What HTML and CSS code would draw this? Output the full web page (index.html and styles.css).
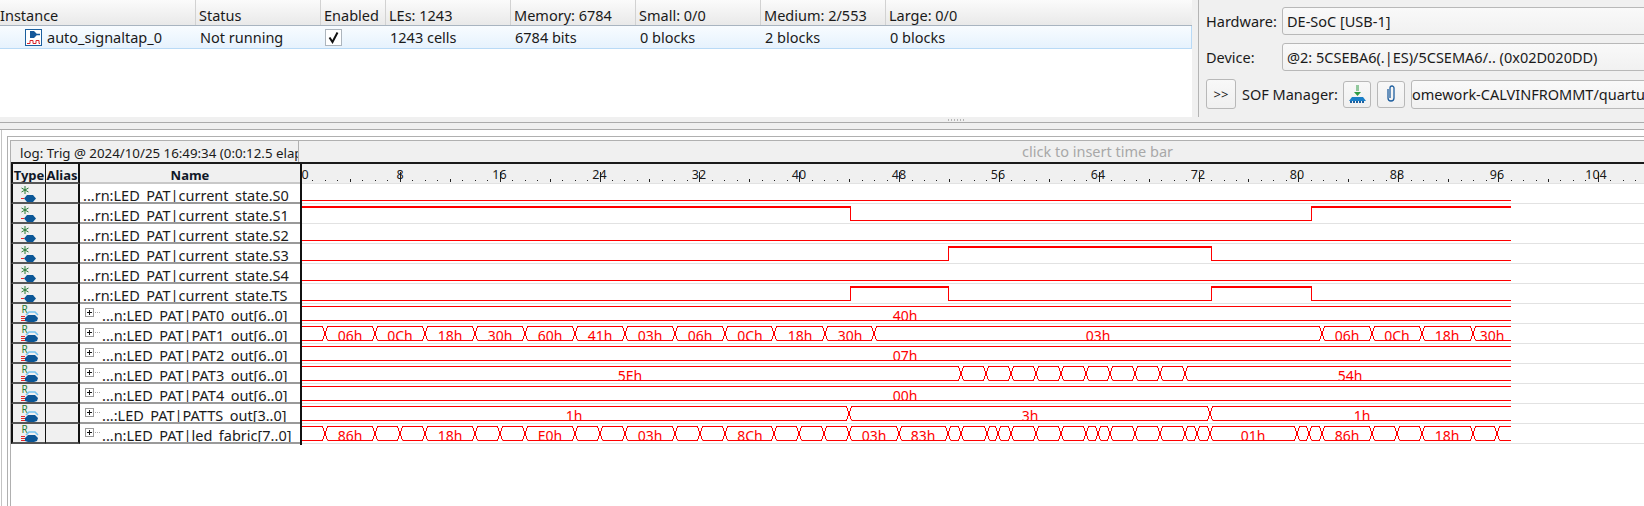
FILE: index.html
```html
<!DOCTYPE html>
<html lang="en">
<head>
<meta charset="utf-8">
<title>Signal Tap Logic Analyzer</title>
<link rel="stylesheet" href="styles.css">
</head>
<body>
<svg class="defs" width="0" height="0" aria-hidden="true">
  <defs>
    <g id="bit">
      <path class="star" d="M13 2v8M9.5 4l7 4M16.5 4l-7 4"/>
      <path class="dash" d="M9 14.5h3"/>
      <path class="blob" d="M12 14.5l3-3.5h6l3 3.5-3 3.5h-6z"/>
    </g>
    <g id="reg">
      <text class="rtag" x="9.5" y="9">R</text>
      <path class="dash" d="M9 12.5h4M9 14.5h4M9 16.5h4"/>
      <path class="blob" d="M13 14l3-3h7l3 3-1 3-3 1h-6l-3-1z"/>
      <path class="band" d="M14 11l3-3h6l3 3"/>
    </g>
    <g id="plus">
      <rect class="plusbox" x="0.5" y="3.5" width="8" height="8"/>
      <path class="plusmark" d="M2 7.5h5M4.5 5v5"/>
      <path class="plusdots" d="M10 7.5h6"/>
    </g>
    <g id="x">
      <rect x="-2" y="2" width="4.5" height="17" fill="#fff"/>
      <path class="bus" d="M-2.5 3.5L2.5 17.5M-2.5 17.5L2.5 3.5"/>
    </g>
  </defs>
</svg>

<section class="top">
  <div class="instances">
    <div class="ihead">
      <div class="ih c1">Instance</div>
      <div class="ih c2">Status</div>
      <div class="ih c3">Enabled</div>
      <div class="ih c4">LEs: 1243</div>
      <div class="ih c5">Memory: 6784</div>
      <div class="ih c5">Small: 0/0</div>
      <div class="ih c5">Medium: 2/553</div>
      <div class="ih c6">Large: 0/0</div>
    </div>
    <div class="irow">
      <div class="id c1 inst">
        <svg class="insticon" width="17" height="17" viewBox="0 0 17 17">
          <rect x="0.5" y="0.5" width="16" height="16" fill="#fff" stroke="#1b5f9e"/>
          <path d="M5 2h4l3 3v1l-3 3H5z" fill="#14589a"/>
          <path d="M12 5.5h3" stroke="#14589a" stroke-width="1.5"/>
          <path d="M2 14.5h3v-3h3v3h3v-3h3v3h1" fill="none" stroke="#d8232a"/>
        </svg>
        <span>auto_signaltap_0</span>
      </div>
      <div class="id c2">Not running</div>
      <div class="id c3">
        <span class="check">
          <svg width="15" height="15" viewBox="0 0 15 15"><path d="M3.5 7.5l3 4.5 5-9.5" fill="none" stroke="#111" stroke-width="2"/></svg>
        </span>
      </div>
      <div class="id c4">1243 cells</div>
      <div class="id c5">6784 bits</div>
      <div class="id c5">0 blocks</div>
      <div class="id c5">2 blocks</div>
      <div class="id c6">0 blocks</div>
    </div>
  </div>
  <div class="grip"></div>
  <div class="hardware">
    <div class="hwrow">
      <span class="hwlabel">Hardware:</span>
      <div class="combo">DE-SoC [USB-1]</div>
    </div>
    <div class="hwrow">
      <span class="hwlabel">Device:</span>
      <div class="combo">@2: 5CSEBA6(.|ES)/5CSEMA6/.. (0x02D020DD)</div>
    </div>
    <div class="sofrow">
      <button class="btn more" type="button">&gt;&gt;</button>
      <span class="soflabel">SOF Manager:</span>
      <button class="btn tool" type="button">
        <svg width="19" height="19" viewBox="0 0 19 19">
          <path d="M8 1h3M8 3h3M8 5h3" stroke="#2e9b45"/>
          <path d="M6 7h7l-3.5 4z" fill="#2e9b45"/>
          <path d="M1 16l3-4h11l3 4z" fill="#1a7fc8"/>
          <path d="M2 17h15" stroke="#1a5fa0" stroke-width="2" stroke-dasharray="2 1"/>
        </svg>
      </button>
      <button class="btn tool" type="button">
        <svg width="14" height="20" viewBox="0 0 14 20">
          <path d="M4 5v9a3 3 0 0 0 6 0V4a2 2 0 0 0-4 0v10" fill="none" stroke="#1f5f9f" stroke-width="1.3"/>
        </svg>
      </button>
      <div class="combo file">omework-CALVINFROMMT/quartus/output_files/soc_system.sof</div>
    </div>
  </div>
</section>

<div class="splitter"><span class="dots"></span></div>
<div class="tabband"></div>

<section class="lower">
  <div class="outer">
    <div class="inner">
      <div class="bar">
        <div class="log">log: Trig @ 2024/10/25 16:49:34 (0:0:12.5 elapsed)</div>
        <div class="insert">click to insert time bar</div>
      </div>
      <div class="table">
        <div class="signals">
          <div class="shead">
            <div class="th tcol">Type</div>
            <div class="th acol">Alias</div>
            <div class="th ncol">Name</div>
          </div>
          <div class="sig"><div class="tcol cell"><svg class="ticon" width="32" height="20"><use href="#bit"/></svg></div><div class="acol cell"></div><div class="name">...rn:LED_PAT|current_state.S0</div></div>
          <div class="sig"><div class="tcol cell"><svg class="ticon" width="32" height="20"><use href="#bit"/></svg></div><div class="acol cell"></div><div class="name">...rn:LED_PAT|current_state.S1</div></div>
          <div class="sig"><div class="tcol cell"><svg class="ticon" width="32" height="20"><use href="#bit"/></svg></div><div class="acol cell"></div><div class="name">...rn:LED_PAT|current_state.S2</div></div>
          <div class="sig"><div class="tcol cell"><svg class="ticon" width="32" height="20"><use href="#bit"/></svg></div><div class="acol cell"></div><div class="name">...rn:LED_PAT|current_state.S3</div></div>
          <div class="sig"><div class="tcol cell"><svg class="ticon" width="32" height="20"><use href="#bit"/></svg></div><div class="acol cell"></div><div class="name">...rn:LED_PAT|current_state.S4</div></div>
          <div class="sig"><div class="tcol cell"><svg class="ticon" width="32" height="20"><use href="#bit"/></svg></div><div class="acol cell"></div><div class="name">...rn:LED_PAT|current_state.TS</div></div>
          <div class="sig"><div class="tcol cell"><svg class="ticon" width="32" height="20"><use href="#reg"/></svg></div><div class="acol cell"></div><div class="name bus-name"><svg class="pluss" width="17" height="14"><use href="#plus"/></svg>...n:LED_PAT|PAT0_out[6..0]</div></div>
          <div class="sig"><div class="tcol cell"><svg class="ticon" width="32" height="20"><use href="#reg"/></svg></div><div class="acol cell"></div><div class="name bus-name"><svg class="pluss" width="17" height="14"><use href="#plus"/></svg>...n:LED_PAT|PAT1_out[6..0]</div></div>
          <div class="sig"><div class="tcol cell"><svg class="ticon" width="32" height="20"><use href="#reg"/></svg></div><div class="acol cell"></div><div class="name bus-name"><svg class="pluss" width="17" height="14"><use href="#plus"/></svg>...n:LED_PAT|PAT2_out[6..0]</div></div>
          <div class="sig"><div class="tcol cell"><svg class="ticon" width="32" height="20"><use href="#reg"/></svg></div><div class="acol cell"></div><div class="name bus-name"><svg class="pluss" width="17" height="14"><use href="#plus"/></svg>...n:LED_PAT|PAT3_out[6..0]</div></div>
          <div class="sig"><div class="tcol cell"><svg class="ticon" width="32" height="20"><use href="#reg"/></svg></div><div class="acol cell"></div><div class="name bus-name"><svg class="pluss" width="17" height="14"><use href="#plus"/></svg>...n:LED_PAT|PAT4_out[6..0]</div></div>
          <div class="sig"><div class="tcol cell"><svg class="ticon" width="32" height="20"><use href="#reg"/></svg></div><div class="acol cell"></div><div class="name bus-name"><svg class="pluss" width="17" height="14"><use href="#plus"/></svg>...:LED_PAT|PATTS_out[3..0]</div></div>
          <div class="sig"><div class="tcol cell"><svg class="ticon" width="32" height="20"><use href="#reg"/></svg></div><div class="acol cell"></div><div class="name bus-name"><svg class="pluss" width="17" height="14"><use href="#plus"/></svg>...n:LED_PAT|led_fabric[7..0]</div></div>
        </div>

        <svg class="wave" width="1342" height="281" viewBox="302 164 1342 281">
          <rect x="302" y="164" width="1342" height="19" fill="#f0f0f0"/>
          <path class="minor" d="M300 180.5H1644"/>
          <path class="minor4" d="M300 180H1644"/>
          <path class="major" d="M300 177H1644"/>
          <g class="rlabels">
            <text x="305" y="179">0</text>
            <text x="400" y="179">8</text>
            <text x="499.5" y="179">16</text>
            <text x="599.5" y="179">24</text>
            <text x="699" y="179">32</text>
            <text x="799" y="179">40</text>
            <text x="899" y="179">48</text>
            <text x="998" y="179">56</text>
            <text x="1098" y="179">64</text>
            <text x="1198" y="179">72</text>
            <text x="1297" y="179">80</text>
            <text x="1397" y="179">88</text>
            <text x="1497" y="179">96</text>
            <text x="1596" y="179">104</text>
          </g>
          <path class="rows" d="M302 183.5H1644M302 203.5H1644M302 223.5H1644M302 243.5H1644M302 263.5H1644M302 283.5H1644M302 303.5H1644M302 323.5H1644M302 343.5H1644M302 363.5H1644M302 383.5H1644M302 403.5H1644M302 423.5H1644M302 443.5H1644"/>

          <g transform="translate(0,183)"><path class="bus" d="M302 17.5H1511"/></g>
          <g transform="translate(0,203)">
            <path class="hi" d="M302 3.5H850M1311 3.5H1511"/>
            <path class="bus" d="M850.5 3V17.5H1311.5V3"/>
          </g>
          <g transform="translate(0,223)"><path class="bus" d="M302 17.5H1511"/></g>
          <g transform="translate(0,243)">
            <path class="hi" d="M948 3.5H1211"/>
            <path class="bus" d="M302 17.5H948.5V3M1211.5 3V17.5H1511"/>
          </g>
          <g transform="translate(0,263)"><path class="bus" d="M302 17.5H1511"/></g>
          <g transform="translate(0,283)">
            <path class="hi" d="M850 3.5H948M1211 3.5H1311"/>
            <path class="bus" d="M302 17.5H850.5V3M948.5 3V17.5H1211.5V3M1311.5 3V17.5H1511"/>
          </g>

          <g transform="translate(0,303)">
            <path class="bus" d="M302 3.5H1511M302 17.5H1511"/>
            <text class="val" x="905" y="18">40h</text>
          </g>
          <g transform="translate(0,323)">
            <path class="bus" d="M302 3.5H1511M302 17.5H1511"/>
            <use href="#x" x="325"/><use href="#x" x="375"/><use href="#x" x="425"/><use href="#x" x="475"/><use href="#x" x="525"/><use href="#x" x="575"/><use href="#x" x="625"/><use href="#x" x="675"/><use href="#x" x="725"/><use href="#x" x="774"/><use href="#x" x="825"/><use href="#x" x="874"/><use href="#x" x="1322"/><use href="#x" x="1372"/><use href="#x" x="1422"/><use href="#x" x="1473"/>
            <text class="val" x="350" y="18">06h</text><text class="val" x="400" y="18">0Ch</text><text class="val" x="450" y="18">18h</text><text class="val" x="500" y="18">30h</text><text class="val" x="550" y="18">60h</text><text class="val" x="600" y="18">41h</text><text class="val" x="650" y="18">03h</text><text class="val" x="700" y="18">06h</text><text class="val" x="750" y="18">0Ch</text><text class="val" x="800" y="18">18h</text><text class="val" x="850" y="18">30h</text><text class="val" x="1098" y="18">03h</text><text class="val" x="1347" y="18">06h</text><text class="val" x="1397" y="18">0Ch</text><text class="val" x="1447" y="18">18h</text><text class="val" x="1492" y="18">30h</text>
          </g>
          <g transform="translate(0,343)">
            <path class="bus" d="M302 3.5H1511M302 17.5H1511"/>
            <text class="val" x="905" y="18">07h</text>
          </g>
          <g transform="translate(0,363)">
            <path class="bus" d="M302 3.5H1511M302 17.5H1511"/>
            <use href="#x" x="961"/><use href="#x" x="986"/><use href="#x" x="1011"/><use href="#x" x="1036"/><use href="#x" x="1061"/><use href="#x" x="1086"/><use href="#x" x="1110"/><use href="#x" x="1135"/><use href="#x" x="1160"/><use href="#x" x="1185"/>
            <text class="val" x="630" y="18">5Eh</text><text class="val" x="1350" y="18">54h</text>
          </g>
          <g transform="translate(0,383)">
            <path class="bus" d="M302 3.5H1511M302 17.5H1511"/>
            <text class="val" x="905" y="18">00h</text>
          </g>
          <g transform="translate(0,403)">
            <path class="bus" d="M302 3.5H1511M302 17.5H1511"/>
            <use href="#x" x="849"/><use href="#x" x="1210"/>
            <text class="val" x="574" y="18">1h</text><text class="val" x="1030" y="18">3h</text><text class="val" x="1362" y="18">1h</text>
          </g>
          <g transform="translate(0,423)">
            <path class="bus" d="M302 3.5H1511M302 17.5H1511"/>
            <use href="#x" x="325"/><use href="#x" x="375"/><use href="#x" x="400"/><use href="#x" x="425"/><use href="#x" x="475"/><use href="#x" x="500"/><use href="#x" x="525"/><use href="#x" x="575"/><use href="#x" x="600"/><use href="#x" x="625"/><use href="#x" x="675"/><use href="#x" x="700"/><use href="#x" x="725"/><use href="#x" x="774"/><use href="#x" x="799"/><use href="#x" x="824"/><use href="#x" x="849"/><use href="#x" x="899"/><use href="#x" x="948"/><use href="#x" x="961"/><use href="#x" x="987"/><use href="#x" x="998"/><use href="#x" x="1011"/><use href="#x" x="1036"/><use href="#x" x="1061"/><use href="#x" x="1086"/><use href="#x" x="1098"/><use href="#x" x="1110"/><use href="#x" x="1135"/><use href="#x" x="1160"/><use href="#x" x="1185"/><use href="#x" x="1197"/><use href="#x" x="1210"/><use href="#x" x="1297"/><use href="#x" x="1309"/><use href="#x" x="1322"/><use href="#x" x="1372"/><use href="#x" x="1397"/><use href="#x" x="1422"/><use href="#x" x="1473"/><use href="#x" x="1497"/>
            <text class="val" x="350" y="18">86h</text><text class="val" x="450" y="18">18h</text><text class="val" x="550" y="18">E0h</text><text class="val" x="650" y="18">03h</text><text class="val" x="750" y="18">8Ch</text><text class="val" x="874" y="18">03h</text><text class="val" x="923" y="18">83h</text><text class="val" x="1253" y="18">01h</text><text class="val" x="1347" y="18">86h</text><text class="val" x="1447" y="18">18h</text>
          </g>
        </svg>
      </div>
    </div>
  </div>
</section>
</body>
</html>
```
FILE: styles.css
```css
* { box-sizing: border-box; }
html, body { margin: 0; padding: 0; }
body {
  width: 1644px;
  height: 506px;
  overflow: hidden;
  background: #fff;
  color: #1a1a1a;
  font-family: "Noto Sans", "Liberation Sans", sans-serif;
  font-size: 14.5px;
  display: flex;
  flex-direction: column;
}
.defs { position: absolute; }

/* top panel */
.top { display: flex; height: 117px; flex: none; }
.instances { width: 1192px; flex: none; overflow: hidden; background: #fff; }
.ihead {
  display: flex;
  height: 26px;
  background: linear-gradient(#fbfbfb, #e9e9e9);
  border-bottom: 1px solid #a8b4c0;
}
.ih {
  padding: 4px 0 0 3px;
  line-height: 22px;
  border-right: 1px solid #d2d2d2;
  white-space: nowrap;
  overflow: hidden;
}
.c1 { width: 196px; }
.c2 { width: 125px; }
.c3 { width: 65px; }
.c4 { width: 125px; }
.c5 { width: 125px; }
.c6 { flex: 1; border-right: 0; }
.ih.c1 { padding-left: 0; }
.irow {
  display: flex;
  height: 23px;
  background: linear-gradient(#f8fcff, #e6f2fd);
  border-bottom: 1px solid #b9daf6;
  border-right: 1px solid #b9daf6;
}
.id { padding: 0 0 0 4px; line-height: 23px; white-space: nowrap; }
.inst { display: flex; align-items: center; padding-left: 25px; gap: 5px; }
.check {
  display: flex;
  align-items: center;
  justify-content: center;
  width: 17px;
  height: 17px;
  margin: 3px 0 0 0;
  background: #fff;
  border: 1px solid #adb5bd;
}
.c3.id { padding-left: 4px; }

.grip { width: 7px; flex: none; background: #f0f0f0; border-right: 1px solid #b4b4b4; }
.hardware {
  flex: 1;
  min-width: 0;
  overflow: hidden;
  background: #f0f0f0;
  padding: 7px 0 0 7px;
  display: flex;
  flex-direction: column;
  gap: 8px;
}
.hwrow { display: flex; align-items: center; height: 28px; }
.hwlabel { width: 76px; flex: none; }
.combo {
  width: 500px;
  height: 28px;
  flex: none;
  padding-left: 4px;
  line-height: 26px;
  white-space: nowrap;
  overflow: hidden;
  background: linear-gradient(#f9f9f9, #f1f1f1);
  border: 1px solid #b8b8b8;
  border-radius: 3px;
}
.sofrow { display: flex; align-items: center; height: 30px; }
.btn {
  display: flex;
  flex: none;
  align-items: center;
  justify-content: center;
  padding: 0;
  font: inherit;
  color: #1a1a1a;
  background: linear-gradient(#f8f8f8, #f0f0f0);
  border: 1px solid #b8b8b8;
  border-radius: 3px;
}
.more { width: 30px; height: 30px; font-size: 13px; }
.soflabel { flex: none; margin: 0 5px 0 6px; width: 96px; white-space: nowrap; }
.tool { width: 28px; height: 27px; margin-right: 6px; }
.file { height: 29px; padding-left: 0; width: 400px; }

.splitter {
  height: 5px;
  flex: none;
  background: #f0f0f0;
  display: flex;
  justify-content: center;
  align-items: center;
  padding-left: 268px;
}
.dots {
  width: 16px;
  height: 2px;
  background: repeating-linear-gradient(90deg, #b5b5b5 0 1px, transparent 1px 3px);
}
.tabband {
  height: 8px;
  flex: none;
  background: #f0f0f0;
  border-top: 1px solid #ababab;
  border-bottom: 1px solid #ababab;
}

/* lower panel */
.lower {
  flex: 1;
  min-height: 0;
  margin-left: 1px;
  padding: 6px 0 0 5px;
  border-left: 1px solid #c4c4c4;
}
.outer {
  height: 100%;
  padding: 3px 0 0 2px;
  border-left: 1px solid #b0b0b0;
  border-top: 1px solid #b0b0b0;
}
.inner {
  height: 100%;
  border-left: 1px solid #b0b0b0;
  border-top: 1px solid #b0b0b0;
}
.bar {
  display: flex;
  height: 23px;
  background: #f0f0f0;
  border-bottom: 2px solid #1a1a1a;
}
.log {
  width: 288px;
  flex: none;
  padding: 1px 0 0 9px;
  line-height: 22px;
  font-size: 13.3px;
  white-space: nowrap;
  overflow: hidden;
  border-right: 1px solid #b0b0b0;
}
.insert {
  flex: 1;
  padding: 0 0 0 723px;
  line-height: 21px;
  color: #a8a8a8;
  white-space: nowrap;
}

.table { display: flex; }
.signals { width: 291px; flex: none; border-right: 2px solid #111; }
.shead { display: flex; height: 20px; background: #f0f0f0; }
.th {
  font-weight: 700;
  font-size: 13px;
  line-height: 22px;
  text-align: center;
  color: #101828;
  overflow: hidden;
  border-bottom: 2px solid #555;
}
.tcol { width: 35px; flex: none; border-left: 2px solid #111; border-right: 1px solid #111; }
.acol { width: 34px; flex: none; border-right: 2px solid #111; }
.ncol { flex: 1; border-bottom-color: #c8c8c8; }
.sig { display: flex; height: 20px; }
.cell { background: #f0f0f0; border-bottom: 2px solid #555; }
.ticon { display: block; margin-left: -1px; }
.name {
  flex: 1;
  min-width: 0;
  height: 20px;
  padding: 4px 0 0 3px;
  line-height: 15px;
  white-space: nowrap;
  overflow: hidden;
  border-bottom: 2px solid #9a9a9a;
  background: #fff;
}
.bus-name { display: flex; padding-left: 5px; }
.pluss { flex: none; margin: -3px 0 0 0; }

/* icon parts */
.star { stroke: #2a7d36; fill: none; stroke-width: 1; }
.dash { stroke: #e0262a; fill: none; stroke-width: 1; }
.blob { fill: #0b5797; }
.band { stroke: #74c2ef; fill: none; stroke-width: 1.5; }
.rtag { font-size: 10px; fill: #2a7d36; font-family: "Noto Sans", sans-serif; }
.plusbox { fill: #fff; stroke: #9a9a9a; }
.plusmark { stroke: #111; fill: none; }
.plusdots { stroke: #aaa; stroke-dasharray: 1 1; fill: none; }

/* waveform canvas */
.wave { display: block; flex: none; }
.wave path { shape-rendering: crispEdges; }
.bus { fill: none; stroke: #f00; stroke-width: 1; shape-rendering: crispEdges; }
.hi { fill: none; stroke: #f00; stroke-width: 2; }
.rows { fill: none; stroke: #e2e2e2; stroke-width: 1; }
.minor { stroke: #222; stroke-width: 1.5; stroke-dasharray: 1 11.48; fill: none; }
.minor4 { stroke: #222; stroke-width: 3; stroke-dasharray: 1 48.92; fill: none; }
.major { stroke: #222; stroke-width: 10; stroke-dasharray: 1 98.84; fill: none; }
.rlabels text { font-size: 12.5px; text-anchor: middle; fill: #1a1a1a; }
.val { font-size: 14px; text-anchor: middle; fill: #f00; }
```
